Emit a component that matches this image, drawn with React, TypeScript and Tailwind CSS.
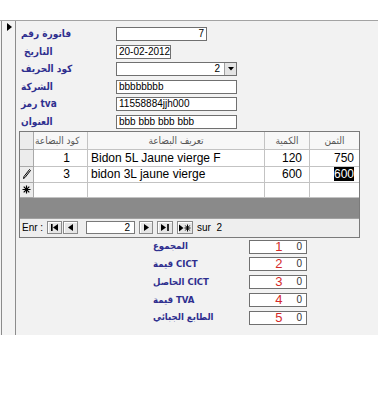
import React from 'react';

const arabicBold = "font-['DejaVu_Sans_Condensed','DejaVu_Sans',sans-serif] font-bold text-[#2f2f8f] whitespace-nowrap";
const labelCls = `w-[100px] pl-[5px] text-[10px] leading-[14px] ${arabicBold}`;
const boxCls = "h-[14px] border border-[#707070] bg-white text-[10px] leading-[12px] px-[2px] text-black whitespace-nowrap overflow-hidden";

function NavBtn({ w, children }: { w: number; children: React.ReactNode }) {
  return (
    <div
      className="h-[13px] border border-[#8a8a8a] bg-[#e6e6e6] flex items-center justify-center shadow-[inset_1px_1px_0_#fff]"
      style={{ width: w }}
    >
      {children}
    </div>
  );
}

const First = () => (
  <svg width="8" height="7" viewBox="0 0 8 7"><rect x="0" y="0" width="1.6" height="7" fill="#000" /><path d="M7 0 L2 3.5 L7 7 Z" fill="#000" /></svg>
);
const Prev = () => (
  <svg width="5" height="7" viewBox="0 0 5 7"><path d="M5 0 L0 3.5 L5 7 Z" fill="#000" /></svg>
);
const Next = () => (
  <svg width="5" height="7" viewBox="0 0 5 7"><path d="M0 0 L5 3.5 L0 7 Z" fill="#000" /></svg>
);
const Last = () => (
  <svg width="8" height="7" viewBox="0 0 8 7"><path d="M0 0 L5 3.5 L0 7 Z" fill="#000" /><rect x="6.2" y="0" width="1.6" height="7" fill="#000" /></svg>
);
const NewRec = () => (
  <svg width="12" height="8" viewBox="0 0 12 8">
    <path d="M0 0.5 L4.5 4 L0 7.5 Z" fill="#000" />
    <path d="M8.5 0.5 V7.5 M5.5 4 H11.5 M6.3 1.5 L10.7 6.5 M10.7 1.5 L6.3 6.5" stroke="#000" strokeWidth="1" />
  </svg>
);

const Pencil = () => (
  <svg width="8" height="10" viewBox="0 0 8 10">
    <path d="M6.5 0.5 L7.5 1.5 L2 8.5 L0.5 9.5 L1 7.5 Z" fill="none" stroke="#000" strokeWidth="1" />
  </svg>
);
const Star = () => (
  <svg width="9" height="9" viewBox="0 0 9 9">
    <path d="M4.5 0.5 V8.5 M0.5 4.5 H8.5 M1.7 1.7 L7.3 7.3 M7.3 1.7 L1.7 7.3" stroke="#000" strokeWidth="1.2" />
  </svg>
);

const cell = "border-r border-b border-[#c3c3c3] overflow-hidden whitespace-nowrap";
const sel = "border-r border-b border-[#a9a9a9] bg-[#ececec] flex items-center justify-center";
const head = "h-[18px] bg-[#f7f7f7] text-[10px] text-[#555] leading-[17px] font-['DejaVu_Sans_Condensed','DejaVu_Sans',sans-serif]";

const totals = [
  { label: 'المجموع', n: '1' },
  { label: 'قيمة CICT', n: '2' },
  { label: 'الحاصل CICT', n: '3' },
  { label: 'قيمة TVA', n: '4' },
  { label: 'الطابع الجبائي', n: '5' },
];

export default function App() {
  return (
    <div className="w-[378px] h-[400px] bg-white pt-[20px] font-['Liberation_Sans','DejaVu_Sans',sans-serif]">
      <div className="flex h-[315px] border-t border-[#a3a3a3]">
        {/* record selector */}
        <div className="w-[16px] pl-[1px] bg-[#f4f4f4]">
          <div className="h-full w-[15px] border-l border-r border-[#8c8c8c] pt-[2px] pl-[5px]">
            <svg width="5" height="8" viewBox="0 0 5 8"><path d="M0 0 L5 4 L0 8 Z" fill="#000" /></svg>
          </div>
        </div>

        {/* form body */}
        <div className="flex-1 bg-[#f2f2f2] pt-[6px]">
          <div className="flex flex-col gap-[3.5px]">
            <div className="flex items-center h-[14px]">
              <div className={labelCls}>فاتورة رقم</div>
              <div className={`${boxCls} w-[91px] text-right`}>7</div>
            </div>
            <div className="flex items-center h-[14px]">
              <div className={`${labelCls} pl-[8px]`}>التاريخ</div>
              <div className={`${boxCls} w-[55px]`}>20-02-2012</div>
            </div>
            <div className="flex items-center h-[14px]">
              <div className={labelCls}>كود الحريف</div>
              <div className={`${boxCls} w-[121px] flex justify-end items-center pr-0`}>
                <span className="mr-[4px]">2</span>
                <div className="w-[12px] h-[12px] bg-[#e4e4e4] border-l border-[#a0a0a0] flex items-center justify-center">
                  <svg width="6" height="4" viewBox="0 0 6 4"><path d="M0 0 H6 L3 3.5 Z" fill="#000" /></svg>
                </div>
              </div>
            </div>
            <div className="flex items-center h-[14px]">
              <div className={labelCls}>الشركة</div>
              <div className={`${boxCls} w-[121px]`}>bbbbbbbb</div>
            </div>
            <div className="flex items-center h-[14px]">
              <div className={labelCls}>رمز tva</div>
              <div className={`${boxCls} w-[121px]`}>11558884jjh000</div>
            </div>
            <div className="flex items-center h-[14px]">
              <div className={labelCls}>العنوان</div>
              <div className={`${boxCls} w-[121px]`}>bbb bbb bbb bbb</div>
            </div>
          </div>

          {/* subform */}
          <div className="ml-[3px] mt-[2px] w-[341px] border border-[#7a7a7a] bg-white">
            <div className="grid grid-cols-[14px_54px_177px_45px_49px] text-[12px] text-black">
              <div className={`${sel} h-[18px]`} />
              <div className={`${cell} ${head} pl-[1px]`}>كود البضاعة</div>
              <div className={`${cell} ${head} text-center`}>تعريف البضاعة</div>
              <div className={`${cell} ${head} text-center`}>الكمية</div>
              <div className={`${cell} ${head} text-center border-r-0`}>الثمن</div>

              <div className={`${sel} h-[17px]`} />
              <div className={`${cell} h-[17px] leading-[16px] text-right pr-[17px]`}>1</div>
              <div className={`${cell} h-[17px] leading-[16px] pl-[3px]`}>Bidon 5L Jaune vierge F</div>
              <div className={`${cell} h-[17px] leading-[16px] text-right pr-[7px]`}>120</div>
              <div className={`${cell} h-[17px] leading-[16px] text-right pr-[5px] border-r-0`}>750</div>

              <div className={`${sel} h-[16px]`}><Pencil /></div>
              <div className={`${cell} h-[16px] leading-[15px] text-right pr-[17px]`}>3</div>
              <div className={`${cell} h-[16px] leading-[15px] pl-[3px]`}>bidon 3L jaune vierge</div>
              <div className={`${cell} h-[16px] leading-[15px] text-right pr-[7px]`}>600</div>
              <div className={`${cell} h-[16px] leading-[15px] text-right pr-[5px] border-r-0`}>
                <span className="bg-black text-white">600</span>
              </div>

              <div className={`${sel} h-[15px]`}><Star /></div>
              <div className={`${cell} h-[15px]`} />
              <div className={`${cell} h-[15px]`} />
              <div className={`${cell} h-[15px]`} />
              <div className={`${cell} h-[15px] border-r-0`} />
            </div>
            <div className="h-[20px] bg-[#8a8a8a]" />
            <div className="h-[19px] bg-[#eeeeee] border-t border-[#a0a0a0] flex items-center text-[10px] text-black">
              <span className="w-[27px] pl-[2px]">Enr :</span>
              <NavBtn w={15}><First /></NavBtn>
              <div className="ml-[1px]"><NavBtn w={15}><Prev /></NavBtn></div>
              <div className="ml-[8px] w-[49px] h-[13px] bg-white border border-[#7a7a7a] text-right pr-[4px] leading-[11px]">2</div>
              <div className="ml-[4px]"><NavBtn w={14}><Next /></NavBtn></div>
              <div className="ml-[4px]"><NavBtn w={16}><Last /></NavBtn></div>
              <div className="ml-[4px]"><NavBtn w={16}><NewRec /></NavBtn></div>
              <span className="ml-[4px]">sur&nbsp; 2</span>
            </div>
          </div>

          {/* totals */}
          <div className="mt-[2px] flex flex-col gap-[3.75px]">
            {totals.map((t) => (
              <div key={t.n} className="flex items-center h-[14px]">
                <div className={`ml-[137px] w-[96px] text-[9.5px] ${arabicBold}`}>{t.label}</div>
                <div className="w-[58px] h-[14px] border border-[#707070] bg-white flex items-center justify-end pr-[4px]">
                  <span className="text-[13px] leading-[12px] text-[#d42a2a]">{t.n}</span>
                  <span className="ml-[14px] text-[10px] leading-[12px] text-[#333]">0</span>
                </div>
              </div>
            ))}
          </div>
        </div>
      </div>
    </div>
  );
}
